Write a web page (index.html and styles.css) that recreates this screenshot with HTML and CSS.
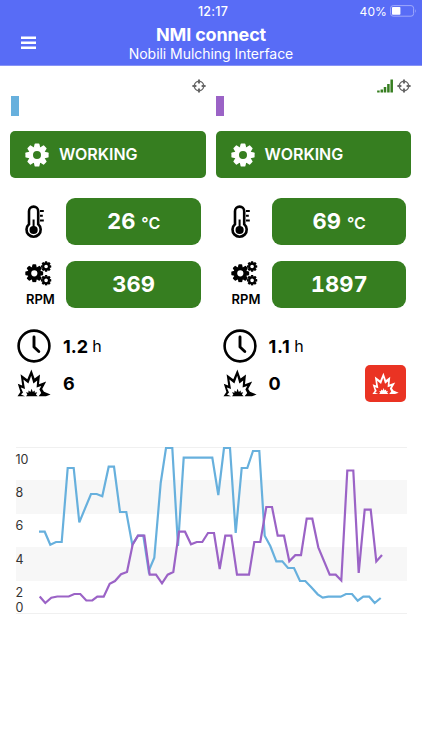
FILE: index.html
```
<!DOCTYPE html>
<html lang="en">
<head>
<meta charset="utf-8">
<title>NMI connect</title>
<link rel="stylesheet" href="styles.css">
</head>
<body>
<svg class="defs" aria-hidden="true">
  <symbol id="gear" viewBox="-12 -12 24 24">
    <circle r="6.3" fill="none" stroke="currentColor" stroke-width="4.6"/>
    <g id="teeth" fill="currentColor">
      <path id="tooth" d="M-3.2-7.5-2.4-11.1q.2-.5.7-.5h3.4q.5 0 .7.5L3.2-7.5z"/>
      <use href="#tooth" transform="rotate(45)"/><use href="#tooth" transform="rotate(90)"/><use href="#tooth" transform="rotate(135)"/><use href="#tooth" transform="rotate(180)"/><use href="#tooth" transform="rotate(225)"/><use href="#tooth" transform="rotate(270)"/><use href="#tooth" transform="rotate(315)"/>
    </g>
  </symbol>
  <symbol id="target" viewBox="0 0 14 14">
    <g fill="none" stroke="currentColor"><circle cx="7" cy="7" r="4.7" stroke-width="1.4"/><path stroke-width="2" d="M7 .4v4M7 9.6v4M.4 7h4M9.6 7h4"/></g>
  </symbol>
  <symbol id="thermo" viewBox="0 0 20 34">
    <path fill="none" stroke="currentColor" stroke-width="2.6" d="M4 19.2V6.2a4.6 4.6 0 0 1 9.2 0v13a7.1 7.1 0 1 1-9.2 0z"/>
    <circle cx="8.6" cy="25" r="4.1" fill="currentColor"/>
    <path stroke="currentColor" stroke-width="2" d="M8.6 14.5V25M15 6h3.8M15 10.8h2.8M15 15.6h3.8"/>
  </symbol>
  <symbol id="gears" viewBox="0 0 27 25">
    <use href="#gear" x="0" y="3" width="18.6" height="18.6"/>
    <use href="#gear" x="15.6" y="0" width="11" height="11"/>
    <use href="#gear" x="15.6" y="13.8" width="11" height="11"/>
  </symbol>
  <symbol id="clock" viewBox="0 0 34 34">
    <g fill="none" stroke="currentColor"><circle cx="17" cy="17" r="15.4" stroke-width="2.6"/><path stroke-width="2.9" stroke-linecap="round" stroke-linejoin="round" d="M17 8v10l4.8 4.5"/></g>
  </symbol>
  <symbol id="burst" viewBox="0 0 34 28">
    <path fill="currentColor" fill-rule="evenodd" d="M.5 27.2 3.4 23 .8 14.8 5.2 16.6 3.6 5.2 10.3 10.2 14.4.4 17.6 9.6 23 5.4 22 15.2 29.2 12.6 25.2 20 27 22.8 33.6 25.6 29 27.2H21.6L24.2 24 22.4 20.4 24.2 17 19.6 18.6 20.2 11.6 16.4 14.4 14.2 6.8 11.4 14.6 6.4 10.6 8 20 3.8 18.6 6 23.4 4 25.6 8 27.2z"/>
    <path fill="currentColor" d="m9 27.2 1.4-1.8-1.4-2.1 2.4.5.1-2.4 1.9 1.5 1.2-3.2 1.2 3.2 1.9-1.5.1 2.4 2.4-.5-1.3 2.1 1.8 1.8z"/>
  </symbol>
</svg>

<header class="topbar">
  <div class="status">
    <span></span>
    <span class="time">12:17</span>
    <span class="battery">40%
      <svg width="27" height="12" viewBox="0 0 27 12"><rect x=".6" y=".6" width="23" height="10.6" rx="2.6" fill="none" stroke="#9fa9fb"/><path d="M25 4q1.6 2 0 4z" fill="#9fa9fb"/><rect x="2" y="2" width="8.4" height="7.8" rx=".8" fill="#fff"/></svg>
    </span>
  </div>
  <div class="nav">
    <svg class="menu" width="16" height="14" viewBox="0 0 16 14"><path stroke="#fff" stroke-width="2.5" d="M0 1.7h15M0 6.8h15M0 11.8h15"/></svg>
    <div class="titles">
      <h1>NMI connect</h1>
      <p>Nobili Mulching Interface</p>
    </div>
  </div>
</header>

<main>
  <div class="machines">
    <section class="machine">
      <div class="signals"><svg class="target"><use href="#target"/></svg></div>
      <div class="swatch blue"></div>
      <div class="state"><svg class="cog"><use href="#gear"/></svg><span>WORKING</span></div>
      <div class="reading">
        <div class="kind"><svg class="thermo"><use href="#thermo"/></svg></div>
        <div class="value">26&nbsp;<small>°C</small></div>
      </div>
      <div class="reading">
        <div class="kind"><svg class="gears"><use href="#gears"/></svg><b>RPM</b></div>
        <div class="value">369</div>
      </div>
      <div class="count hours"><svg class="clock"><use href="#clock"/></svg><b>1.2</b><span>h</span></div>
      <div class="count"><svg class="burst"><use href="#burst"/></svg><b>6</b></div>
    </section>
    <section class="machine">
      <div class="signals">
        <svg width="16" height="14" viewBox="0 0 16 14"><path stroke="#367e20" stroke-width="2.5" d="M1.4 13.5v-2M4.8 13.5v-3M8 13.5V8M11.4 13.5V5M14.7 13.5V.5"/></svg>
        <svg class="target"><use href="#target"/></svg>
      </div>
      <div class="swatch purple"></div>
      <div class="state"><svg class="cog"><use href="#gear"/></svg><span>WORKING</span></div>
      <div class="reading">
        <div class="kind"><svg class="thermo"><use href="#thermo"/></svg></div>
        <div class="value">69&nbsp;<small>°C</small></div>
      </div>
      <div class="reading">
        <div class="kind"><svg class="gears"><use href="#gears"/></svg><b>RPM</b></div>
        <div class="value">1897</div>
      </div>
      <div class="count hours"><svg class="clock"><use href="#clock"/></svg><b class="wide">1.1</b><span>h</span></div>
      <div class="count"><svg class="burst"><use href="#burst"/></svg><b>0</b>
        <div class="alarm"><svg><use href="#burst"/></svg></div>
      </div>
    </section>
  </div>

  <svg class="chart" width="422" height="180" viewBox="0 440 422 180">
    <path fill="#f7f7f7" d="M16 480h391v34H16zM16 547h391v34H16z"/>
    <path stroke="#f0f0f0" d="M16 447.5h391M16 613.5h391"/>
    <g class="axis">
      <text x="15.5" y="463.6">10</text><text x="15.5" y="497">8</text><text x="15.5" y="530.4">6</text><text x="15.5" y="563.7">4</text><text x="15.5" y="597">2</text><text x="15.5" y="611.6">0</text>
    </g>
    <polyline class="line" stroke="#67b0dd" points="39,531.7 44.7,531.7 50.3,544.7 56,542 61.7,542 67.7,468 73.7,468 79.3,522.3 91,494 96.7,494 102.3,496.3 108.7,466.7 114,466.7 120,512 126.3,512 132.3,544.7 138,535.7 143.3,535.7 148.7,571 154.3,557.7 160.7,483 166,448 172.3,448 178,546 183.7,457.7 212.3,457.7 218.3,495 224,448 230,448 235.7,533 241.7,468 247.3,468 253,451 259.3,451 264.7,535.7 270.3,546 276.3,561.3 282.3,561.3 288,568 294,568 300,581 305.3,581 311.3,587.3 317.7,594.3 322.7,597.7 328.3,596.7 340.7,596.7 346,594 352,594 357.7,600.7 363.3,596.7 369.3,596.7 374.7,603 380.7,598"/>
    <polyline class="line" stroke="#9b63c6" points="39.7,596.5 45.3,603 51.3,597.7 57.3,596.5 68.7,596.5 74.3,594 80.3,594 86.3,600.5 92.3,600.5 97.3,596.7 103.7,596.7 109.7,583.7 115,581 121,574.3 127,572 132.7,544.3 138,535.7 144.3,535.7 149.7,574.7 156,574.7 162,583.3 167.7,574.7 173.3,572 179,531.7 185,531.7 191,544.3 196.7,542 202.3,542 208,533 214,533 219.7,569 225.3,535.7 231.3,535.7 237,574.7 249,574.7 254.3,542 260.3,542 266.3,507 272,507 277.7,535.7 284,535.7 289.3,561.3 295.3,555.2 301,555.2 306.7,518.7 312.3,518.7 318.3,547.3 329.7,574.7 335.7,574.7 341.3,580.5 347.3,470.5 353.3,470.5 358.7,573 364.7,509.7 370.7,509.7 376.3,561.5 382,555"/>
  </svg>
</main>
</body>
</html>
```
FILE: styles.css
```
* { box-sizing: border-box; }
body { margin: 0; width: 422px; height: 750px; background: #fff; color: #000; font-family: Inter, sans-serif; overflow: hidden; }
svg { display: block; flex: none; }
.defs { position: absolute; width: 0; height: 0; }
.topbar { height: 66px; background: #586cf6; color: #fff; border-bottom: 1px solid #8793f5; }
.status { display: grid; grid-template-columns: 1fr auto 1fr; height: 22px; align-items: center; font-size: 12px; letter-spacing: .1px; }
.time { font-weight: 500; font-size: 12.5px; padding-left: 4px; letter-spacing: .2px; }
.battery { display: flex; justify-content: flex-end; align-items: center; gap: 3px; padding-right: 5px; }
.nav { display: grid; grid-template-columns: 44px 1fr 44px; }
.menu { margin: 14px 0 0 21px; }
.titles { text-align: center; }
h1 { margin: 2px 0 0; font-size: 18px; line-height: 21px; font-weight: 700; letter-spacing: -.15px; }
p { margin: 0; font-size: 14px; line-height: 18px; letter-spacing: -.04px; }
.machines { display: grid; grid-template-columns: 195.6px 195.6px; gap: 10px; padding: 13px 10px 0; height: 374px; }
.machine { display: flex; flex-direction: column; }
.signals { display: flex; justify-content: flex-end; gap: 4px; height: 17px; }
.target { width: 14px; height: 14px; color: #666; }
.swatch { width: 8px; height: 20px; margin-left: .6px; }
.blue { background: #67b0dd; }
.purple { background: #9b63c6; }
.state { display: flex; align-items: center; gap: 10px; height: 47px; margin: 15px 0 20px .4px; padding-left: 14.6px; border-radius: 5px; background: #367e20; color: #fff; font-size: 16px; font-weight: 600; }
.state span { padding-bottom: 2px; }
.cog { width: 24px; height: 24px; }
.reading { display: flex; height: 47px; margin-bottom: 15.5px; }
.kind { width: 56.4px; padding-left: 15px; display: flex; flex-direction: column; }
.thermo { width: 20px; height: 34px; margin-top: 6.5px; }
.gears { width: 27px; height: 25px; margin-top: .5px; }
.kind b { font-size: 13px; font-weight: 600; line-height: 16px; margin: 4.5px 0 0 1px; }
.value { width: 134.4px; display: flex; align-items: baseline; justify-content: center; border-radius: 9px; background: #367e20; color: #fff; font-size: 22px; line-height: 47px; font-weight: 700; font-variant-numeric: tabular-nums; }
.value small { font-size: 16px; font-weight: 600; }
.count { display: flex; align-items: center; height: 37px; padding-left: 7px; font-size: 18px; }
.count b { font-weight: 700; margin-left: 12px; }
.count .wide { letter-spacing: .6px; }
.count span { margin-left: 4px; font-size: 16px; }
.hours { margin-top: 4.6px; }
.clock { width: 34px; height: 34px; }
.burst { width: 34px; height: 28px; }
.alarm { display: grid; place-items: center; width: 41px; height: 37px; margin-left: auto; margin-right: 5px; border-radius: 5px; background: #ea3323; color: #fff; }
.alarm svg { width: 27px; height: 23px; }
.chart { font-family: Inter, sans-serif; }
.axis { font-size: 12.5px; fill: #333; }
.line { fill: none; stroke-width: 2.2; stroke-miterlimit: 4; }
```
